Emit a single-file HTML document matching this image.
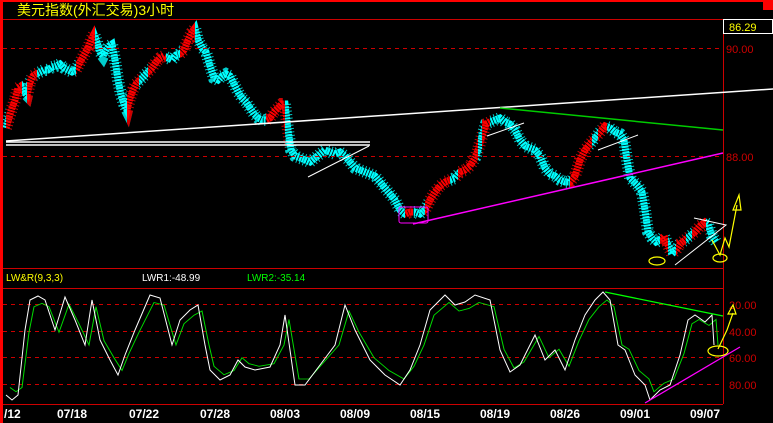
<!DOCTYPE html>
<html><head><meta charset="utf-8"><style>
html,body{margin:0;padding:0;background:#000;width:773px;height:423px;overflow:hidden}
svg{display:block}
text{font-family:"Liberation Sans","Noto Sans CJK SC",sans-serif}
</style></head><body>
<svg width="773" height="423" viewBox="0 0 773 423" xmlns="http://www.w3.org/2000/svg">
<defs>
<polyline id="pr" fill="none" points="6,128 9,118 12,108 15,100 18,88 21,86 24,92 27,95 30,82 33,76 36,74 40,72 44,70 48,70 52,67 56,66 60,64 64,68 68,70 72,72 76,70 80,62 84,55 88,48 91,40 94,34 97,42 100,52 103,56 106,50 109,46 112,44 115,60 118,80 121,95 124,104 127,110 130,98 133,90 136,84 140,80 144,76 148,72 152,68 156,62 160,58 164,56 168,58 172,60 176,55 180,54 184,50 188,40 192,32 195,28 198,40 202,48 206,52 210,66 214,78 218,80 222,76 226,74 230,76 234,84 238,92 242,98 246,102 250,108 254,114 258,118 262,120 266,120 270,118 274,112 278,108 282,104 285,104 288,130 291,150 295,156 300,158 305,160 310,162 315,158 320,154 325,150 330,152 335,154 340,152 345,156 350,162 355,168 360,170 365,172 370,174 375,176 380,182 385,188 390,194 395,200 400,210 405,214 410,212 415,212 420,214 425,210 430,200 435,192 440,186 445,182 450,180 455,178 460,172 465,170 470,166 475,158 478,150 482,136 486,124 490,122 495,120 500,118 505,122 510,124 515,130 520,140 525,146 530,148 535,150 540,156 545,168 550,174 555,176 560,180 565,182 570,182 575,176 580,160 585,150 590,144 595,138 600,132 605,126 610,128 615,132 620,134 624,140 627,160 630,178 634,182 638,186 642,192 645,210 648,232 652,238 656,242 660,240 664,236 668,245 672,254 676,250 680,244 685,240 690,236 695,232 700,226 705,222 708,224 712,236 716,242"/>
<clipPath id="up"><rect x="6" y="0" width="16" height="423"/><rect x="27" y="0" width="10" height="423"/><rect x="76" y="0" width="19" height="423"/><rect x="127" y="0" width="12" height="423"/><rect x="148" y="0" width="18" height="423"/><rect x="180" y="0" width="15" height="423"/><rect x="266" y="0" width="19" height="423"/><rect x="405" y="0" width="8" height="423"/><rect x="425" y="0" width="25" height="423"/><rect x="458" y="0" width="20" height="423"/><rect x="482" y="0" width="8" height="423"/><rect x="570" y="0" width="22" height="423"/><rect x="598" y="0" width="9" height="423"/><rect x="660" y="0" width="8" height="423"/><rect x="676" y="0" width="10" height="423"/><rect x="692" y="0" width="14" height="423"/></clipPath>
<polyline id="wi" fill="none" points="6,395 12,400 18,395 25,330 30,300 38,296 45,300 55,330 65,297 75,320 85,345 92,300 100,340 110,360 118,375 125,355 135,330 150,295 160,298 172,345 180,320 190,310 198,305 205,345 210,370 220,380 230,375 238,360 245,367 255,370 270,367 280,345 285,315 295,385 305,385 320,365 335,345 345,305 355,330 370,360 385,375 400,385 410,370 420,345 430,310 445,295 455,305 465,302 475,295 490,300 500,350 510,372 520,365 535,335 545,360 555,350 565,370 575,340 585,315 595,300 603,292 610,300 618,345 625,350 635,375 645,385 650,400 660,390 670,385 680,355 688,320 695,315 705,322 712,315 714,345"/>
</defs>
<rect width="773" height="423" fill="#000"/>
<use href="#pr" stroke="#0ff" stroke-width="12" stroke-dasharray="1,2.5" opacity="0.8"/>
<use href="#pr" stroke="#0ff" stroke-width="7" stroke-dasharray="2,0.8"/>
<g clip-path="url(#up)">
<use href="#pr" stroke="#000" stroke-width="12"/>
<use href="#pr" stroke="#f00" stroke-width="12" stroke-dasharray="1,2.5" opacity="0.8"/>
<use href="#pr" stroke="#f00" stroke-width="7" stroke-dasharray="2,0.8"/>
</g>
<rect x="0" y="0" width="773" height="2" fill="#f00"/>
<rect x="0" y="0" width="3" height="423" fill="#f00"/>
<rect x="763" y="0" width="10" height="10" fill="#f00"/>
<rect x="3" y="2" width="770" height="17" fill="#000"/>
<line x1="3" y1="19.5" x2="773" y2="19.5" stroke="#c00"/>
<line x1="3" y1="268.5" x2="723" y2="268.5" stroke="#c00"/>
<line x1="3" y1="288.5" x2="723" y2="288.5" stroke="#c00"/>
<line x1="3" y1="404.5" x2="723" y2="404.5" stroke="#c00"/>
<line x1="723.5" y1="19" x2="723.5" y2="404" stroke="#c00"/>
<g stroke="#c00" stroke-dasharray="4,4">
<line x1="3" y1="48.5" x2="723" y2="48.5"/>
<line x1="3" y1="156.5" x2="723" y2="156.5"/>
<line x1="3" y1="304.5" x2="723" y2="304.5"/>
<line x1="3" y1="331.5" x2="723" y2="331.5"/>
<line x1="3" y1="357.5" x2="723" y2="357.5"/>
<line x1="3" y1="384.5" x2="723" y2="384.5"/>
</g>
<rect x="763" y="0" width="10" height="10" fill="#f00"/>
<text x="17" y="15" fill="#ff0" font-size="14">美元指数(外汇交易)3小时</text>
<rect x="723.5" y="19.5" width="49" height="14" fill="#000" stroke="#fff"/>
<text x="729" y="31" fill="#ff0" font-size="11">86.29</text>
<g fill="#c00" font-size="11">
<text x="726" y="53">90.00</text>
<text x="726" y="161">88.00</text>
<text x="729" y="309">20.00</text>
<text x="729" y="336">40.00</text>
<text x="729" y="362">60.00</text>
<text x="729" y="389">80.00</text>
</g>
<text x="6" y="281" fill="#ff0" font-size="10">LW&amp;R(9,3,3)</text>
<text x="142" y="281" fill="#fff" font-size="10">LWR1:-48.99</text>
<text x="247" y="281" fill="#0f0" font-size="10">LWR2:-35.14</text>
<g fill="#fff" font-size="12" font-weight="bold" font-family="Liberation Mono,monospace">
<text x="4" y="418">/12</text>
<text x="57" y="418">07/18</text>
<text x="129" y="418">07/22</text>
<text x="200" y="418">07/28</text>
<text x="270" y="418">08/03</text>
<text x="340" y="418">08/09</text>
<text x="410" y="418">08/15</text>
<text x="480" y="418">08/19</text>
<text x="550" y="418">08/26</text>
<text x="620" y="418">09/01</text>
<text x="690" y="418">09/07</text>
</g>
<line x1="6" y1="141" x2="773" y2="89" stroke="#fff" stroke-width="1.5"/>
<line x1="6" y1="142" x2="370" y2="142" stroke="#fff" stroke-width="1.5"/>
<line x1="6" y1="145" x2="370" y2="145" stroke="#fff" stroke-width="1.5"/>
<line x1="500" y1="108" x2="723" y2="130" stroke="#0c0" stroke-width="1.5"/>
<line x1="413" y1="224" x2="723" y2="153" stroke="#f0f" stroke-width="1.5"/>
<rect x="399" y="207" width="29" height="16" rx="2" fill="none" stroke="#f0f"/>
<g stroke="#fff" fill="none">
<line x1="308" y1="177" x2="369" y2="146"/>
<line x1="487" y1="136" x2="524" y2="123"/>
<line x1="598" y1="150" x2="638" y2="135"/>
<polyline points="694,218 726,225 675,265"/>
</g>
<g stroke="#ff0" fill="none" stroke-width="1.2">
<ellipse cx="657" cy="261" rx="8" ry="4"/>
<ellipse cx="720" cy="258" rx="7" ry="4"/>
<polyline points="712,240 720,255 725,238 729,247 737,205"/>
<polygon points="733,210 741,210 739,195"/>
</g>
<use href="#wi" stroke="#0d0" transform="translate(4,51.75) scale(1,0.85)"/>
<use href="#wi" stroke="#fff"/>
<line x1="605" y1="292" x2="723" y2="316" stroke="#0f0" stroke-width="1.3"/>
<line x1="645" y1="403" x2="740" y2="347" stroke="#f0f" stroke-width="1.3"/>
<g stroke="#ff0" fill="none" stroke-width="1.2">
<ellipse cx="718" cy="351" rx="10" ry="5"/>
<polyline points="718,349 727,330 733,313"/>
<polygon points="728,314 736,314 733,305"/>
</g>
</svg>
</body></html>
